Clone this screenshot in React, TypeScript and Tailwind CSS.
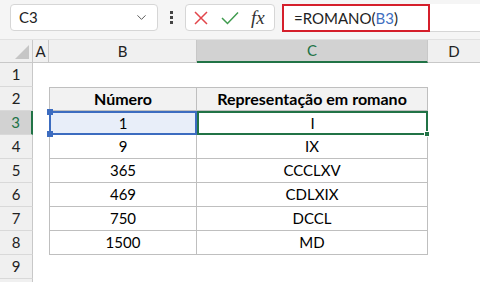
import { ChevronDown } from "lucide-react";

const ROWS: [string, string][] = [
  ["1", "I"],
  ["9", "IX"],
  ["365", "CCCLXV"],
  ["469", "CDLXIX"],
  ["750", "DCCL"],
  ["1500", "MD"],
];

const font = { fontFamily: "Lato, 'Open Sans', sans-serif" };

function RowHead({ n, active }: { n?: number; active?: boolean }) {
  return (
    <div
      className={`h-[24px] flex items-center justify-center text-[15px] border-b border-[#d9d9d9] ${
        active
          ? "bg-[#d2d2d2] text-[#217346] border-r-2 border-r-[#217346]"
          : "bg-[#f0f0f0] text-[#222] border-r border-r-[#c8c8c8]"
      }`}
    >
      {n}
    </div>
  );
}

export default function App() {
  return (
    <div className="w-[480px] h-[282px] overflow-hidden bg-white text-black" style={font}>
      {/* formula bar */}
      <div className="h-[40px] bg-[#f5f5f5] flex items-start pt-[4px] border-b border-[#e1e1e1]">
        <div className="ml-[10px] w-[148px] h-[27px] bg-white border border-[#d6d6d6] rounded-[4px] flex items-center justify-between pl-[8px] pr-[8px] text-[15px] text-[#222]">
          <span>C3</span>
          <ChevronDown size={15} strokeWidth={1.4} className="text-[#444]" />
        </div>
        <div className="w-[27px] h-[27px] flex flex-col items-center justify-center gap-[2px]">
          <span className="w-[3px] h-[3px] bg-[#444]" />
          <span className="w-[3px] h-[3px] bg-[#444]" />
          <span className="w-[3px] h-[3px] bg-[#444]" />
        </div>
        <div className="w-[90px] h-[27px] bg-white border border-[#d6d6d6] rounded-[4px] flex items-center pl-[7px]">
          <svg width="16" height="16" viewBox="0 0 16 16" className="mr-[12px]">
            <path d="M2 2 L14 14 M14 2 L2 14" stroke="#e2464b" strokeWidth="1.5" fill="none" />
          </svg>
          <svg width="18" height="14" viewBox="0 0 18 14" className="mr-[12px]">
            <path d="M1 7 L6.5 12.5 L17 1.5" stroke="#3f9b4e" strokeWidth="1.5" fill="none" />
          </svg>
          <span
            className="italic text-[19px] leading-none text-[#333]"
            style={{ fontFamily: "'Liberation Serif', 'DejaVu Serif', serif" }}
          >
            fx
          </span>
        </div>
        <div className="ml-[7px] flex-1 h-[28px] bg-white border-b border-[#d6d6d6] flex">
          <div className="w-[148px] h-[28px] border-2 border-[#d51f2b] flex items-center pl-[10px] text-[15px] text-[#222]">
            =ROMANO(<span className="text-[#3f6fbf]">B3</span>)
          </div>
        </div>
      </div>

      {/* sheet grid */}
      <div className="grid grid-cols-[33px_16px_148px_231px_1fr]">
        {/* column headers */}
        <div className="h-[23px] bg-[#f0f0f0] border-b border-r border-[#c8c8c8] flex items-end justify-end p-[3px]">
          <div className="w-0 h-0 border-l-[14px] border-l-transparent border-b-[14px] border-b-[#c6c6c6]" />
        </div>
        <div className="h-[23px] bg-[#f0f0f0] border-b border-r border-[#c8c8c8] flex items-center justify-center text-[15px] text-[#222]">
          A
        </div>
        <div className="h-[23px] bg-[#f0f0f0] border-b border-r border-[#c8c8c8] flex items-center justify-center text-[15px] text-[#222]">
          B
        </div>
        <div className="h-[23px] bg-[#d2d2d2] border-b-2 border-b-[#217346] border-r border-r-[#c8c8c8] flex items-center justify-center text-[15px] text-[#217346]">
          C
        </div>
        <div className="h-[23px] bg-[#f0f0f0] border-b border-[#c8c8c8] flex items-center justify-center text-[15px] text-[#222]">
          D
        </div>

        {/* row 1 */}
        <RowHead n={1} />
        <div className="col-span-4 h-[24px]" />

        {/* row 2: table header */}
        <RowHead n={2} />
        <div />
        <div className="h-[24px] bg-[#f2f2f2] border border-[#bfbfbf] flex items-center justify-center font-bold text-[16px]">
          Número
        </div>
        <div className="h-[24px] bg-[#f2f2f2] border-y border-r border-[#bfbfbf] flex items-center justify-center font-bold text-[16px]">
          Representação em romano
        </div>
        <div />

        {ROWS.map(([num, roman], i) => {
          const active = i === 0;
          return [
            <RowHead key={`h${i}`} n={i + 3} active={active} />,
            <div key={`a${i}`} />,
            active ? (
              <div
                key={`b${i}`}
                className="relative h-[24px] bg-[#e8eef9] border-2 border-[#3c6cc0] flex items-center justify-center text-[15px]"
              >
                {num}
                <span className="absolute left-[-4px] top-[-4px] w-[6px] h-[6px] bg-[#3c6cc0]" />
                <span className="absolute left-[-4px] bottom-[-4px] w-[6px] h-[6px] bg-[#3c6cc0]" />
              </div>
            ) : (
              <div
                key={`b${i}`}
                className="h-[24px] border-x border-b border-[#bfbfbf] flex items-center justify-center text-[15px]"
              >
                {num}
              </div>
            ),
            active ? (
              <div
                key={`c${i}`}
                className="relative h-[24px] border-2 border-[#217346] flex items-center justify-center text-[15px]"
              >
                {roman}
                <span className="absolute right-[-4px] bottom-[-4px] w-[6px] h-[6px] bg-[#217346] border border-white" />
              </div>
            ) : (
              <div
                key={`c${i}`}
                className="h-[24px] border-r border-b border-[#bfbfbf] flex items-center justify-center text-[15px]"
              >
                {roman}
              </div>
            ),
            <div key={`d${i}`} />,
          ];
        })}

        {/* rows 9-10 */}
        <RowHead n={9} />
        <div className="col-span-4" />
        <RowHead />
        <div className="col-span-4" />
      </div>
    </div>
  );
}
